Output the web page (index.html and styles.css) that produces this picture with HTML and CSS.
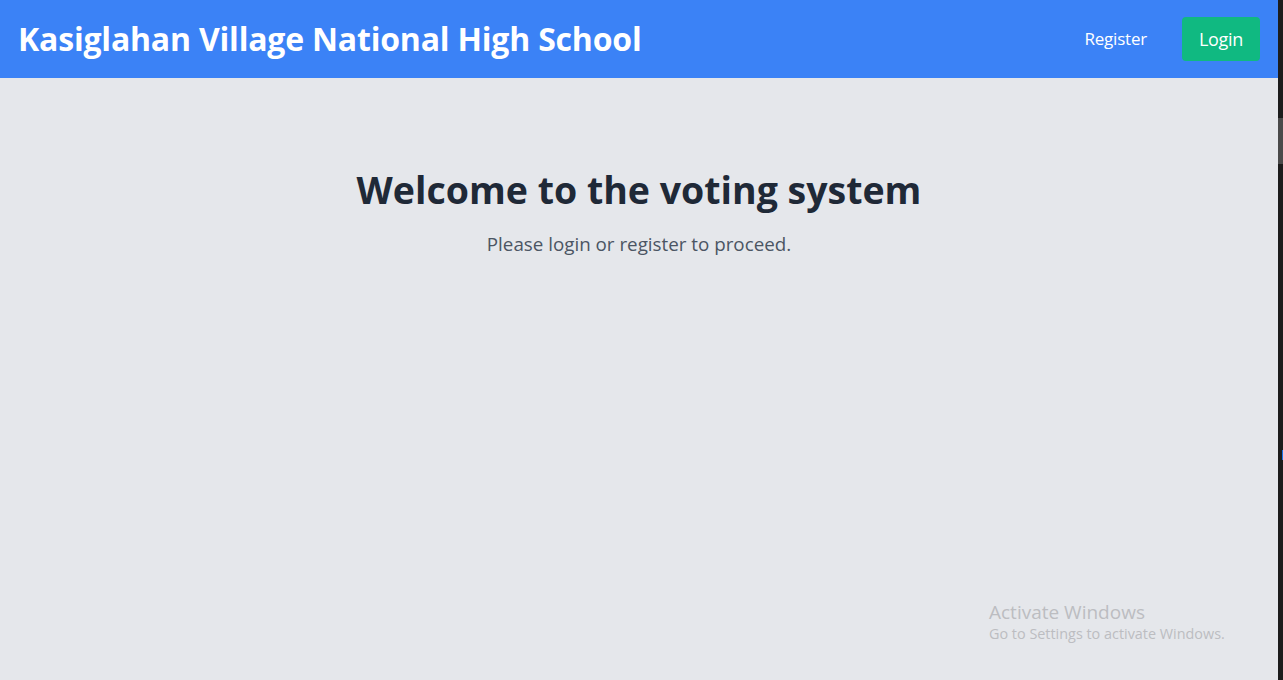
FILE: index.html
```html
<!DOCTYPE html>
<html lang="en">
<head>
<meta charset="utf-8">
<title>Kasiglahan Village National High School</title>
<link rel="stylesheet" href="styles.css">
</head>
<body>
<div class="window">
  <div class="app">
    <header class="topbar">
      <h1 class="brand">Kasiglahan Village National High School</h1>
      <nav class="nav">
        <a class="nav-link" href="#">Register</a>
        <a class="nav-btn" href="#">Login</a>
      </nav>
    </header>
    <main class="hero">
      <h2 class="hero-title">Welcome to the voting system</h2>
      <p class="hero-sub">Please login or register to proceed.</p>
    </main>
    <div class="watermark">
      <div class="wm-title">Activate Windows</div>
      <div class="wm-sub">Go to Settings to activate Windows.</div>
    </div>
  </div>
  <div class="scrollbar">
    <div class="scroll-thumb"></div>
    <div class="scroll-mark"></div>
  </div>
</div>
</body>
</html>
```
FILE: styles.css
```css
* { box-sizing: border-box; }
html, body { margin: 0; padding: 0; height: 100%; }
body {
  font-family: "Open Sans", "Noto Sans", sans-serif;
  background: #e5e7eb;
  overflow: hidden;
}
.window {
  display: flex;
  height: 680px;
  width: 1283px;
}
.app {
  position: relative;
  flex: 1;
  background: #e5e7eb;
  display: flex;
  flex-direction: column;
}
.topbar {
  height: 78px;
  background: #3b82f6;
  display: flex;
  align-items: center;
  justify-content: space-between;
  padding: 0 18px;
}
.brand {
  margin: 0;
  color: #fff;
  font-size: 32px;
  font-weight: 700;
  letter-spacing: -0.2px;
  line-height: 38px;
}
.nav {
  display: flex;
  align-items: center;
  gap: 19px;
}
.nav-link, .nav-btn {
  color: #fff;
  text-decoration: none;
  font-size: 18px;
  line-height: 28px;
  padding: 8px 16px;
  border-radius: 4px;
}
.nav-link {
  font-size: 17px;
  letter-spacing: -0.2px;
}
.nav-btn {
  background: #10b981;
  width: 78px;
  height: 44px;
  text-align: center;
  padding: 8px 0;
  letter-spacing: -0.3px;
}
.hero {
  padding-top: 89px;
  text-align: center;
}
.hero-title {
  margin: 0;
  color: #1f2937;
  font-size: 37.5px;
  line-height: 46px;
  font-weight: 700;
}
.hero-sub {
  margin: 17px 0 0;
  color: #4b5563;
  font-size: 18.8px;
  line-height: 28px;
}
.watermark {
  position: absolute;
  left: 989px;
  top: 600px;
  color: #bcbdc1;
}
.wm-title {
  font-size: 19px;
  line-height: 24px;
}
.wm-sub {
  font-size: 14.4px;
  line-height: 20px;
}
.scrollbar {
  position: relative;
  width: 5px;
  background: #1c1c1c;
}
.scroll-thumb {
  position: absolute;
  top: 118px;
  left: 0;
  width: 5px;
  height: 46px;
  background: #4a4a4a;
}
.scroll-mark {
  position: absolute;
  top: 450px;
  right: 0;
  width: 1px;
  height: 10px;
  background: #1a73e8;
}
```
